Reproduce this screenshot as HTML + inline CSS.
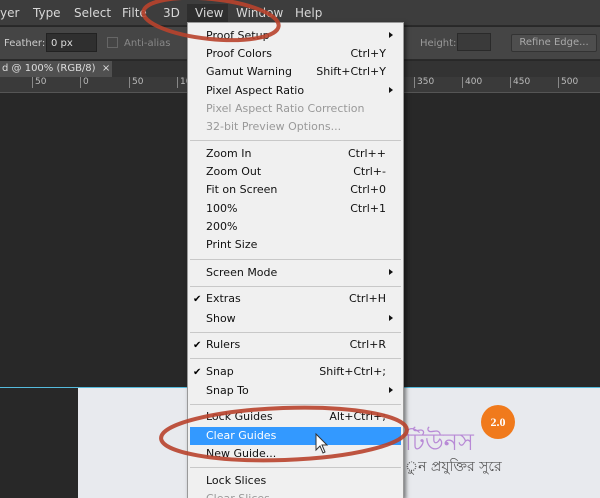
<!DOCTYPE html>
<html style="overflow:hidden;height:498px"><head><meta charset="utf-8"><style>
*{margin:0;padding:0;box-sizing:border-box}
body{width:600px;height:498px;overflow:hidden;background:#282828;font-family:"DejaVu Sans","Liberation Sans",sans-serif;position:relative}
.mb{position:absolute;left:0;top:0;width:600px;height:26px;background:#3d3d3d;border-bottom:1px solid #2a2a2a}
.mb span{position:absolute;top:6px;font-size:12px;color:#d8d8d8}
.ob{position:absolute;left:0;top:27px;width:600px;height:33px;background:#454545;border-bottom:1px solid #2a2a2a}
.ob span{position:absolute;font-size:10px;color:#ccc}
.tb{position:absolute;left:0;top:61px;width:600px;height:16px;background:#333}
.tab{position:absolute;left:0;top:61px;width:112px;height:16px;background:#505050;font-size:10px;color:#ddd;padding:2px 0 0 2px}
.ru{position:absolute;left:0;top:77px;width:600px;height:16px;background:#3a3a3a;border-bottom:1px solid #555}
.ru span{position:absolute;top:0;font-size:9px;color:#bbb;border-left:1px solid #888;padding-left:2px;height:11px}
.menu{position:absolute;left:187px;top:22px;width:217px;height:476px;overflow:hidden;background:#f0f0f0;border:1px solid #999;border-bottom:none;box-shadow:2px 2px 4px rgba(0,0,0,.5)}
.it{position:absolute;left:18px;font-size:11px;color:#111;height:18px;line-height:18px;width:180px}
.it b{font-weight:normal;position:absolute;right:0;top:0}
.dis{color:#999}
.sep{position:absolute;left:2px;width:211px;border-top:1px solid #c8c8c8}
.ar{position:absolute;left:201px;width:0;height:0;border-left:4px solid #111;border-top:3.5px solid transparent;border-bottom:3.5px solid transparent}
.ck{position:absolute;left:5px;font-size:10px}
</style></head><body>
<div class="mb">
<span style="left:0">yer</span><span style="left:33px">Type</span><span style="left:74px">Select</span><span style="left:122px">Filte</span><span style="left:163px">3D</span>
<div style="position:absolute;left:187px;top:4px;width:41px;height:22px;background:#2e2e2e"></div>
<span style="left:195px">View</span><span style="left:236px">Window</span><span style="left:295px">Help</span>
</div>
<div class="ob">
<span style="left:4px;top:11px">Feather:</span>
<div style="position:absolute;left:46px;top:6px;width:51px;height:19px;background:#2f2f2f;border:1px solid #222"></div>
<span style="left:51px;top:11px;color:#ddd">0 px</span>
<div style="position:absolute;left:107px;top:10px;width:11px;height:11px;border:1px solid #666"></div>
<span style="left:124px;top:11px;color:#888">Anti-alias</span>
<span style="left:420px;top:11px;color:#999">Height:</span>
<div style="position:absolute;left:457px;top:6px;width:34px;height:18px;background:#3a3a3a;border:1px solid #2a2a2a"></div>
<div style="position:absolute;left:511px;top:7px;width:86px;height:18px;background:#4e4e4e;border:1px solid #333;border-radius:2px;font-size:10px;color:#aaa;text-align:center;line-height:16px">Refine Edge...</div>
</div>
<div class="tb"></div><div class="tab">d @ 100% (RGB/8) &nbsp;×</div>
<div class="ru"><span style="left:32px">50</span><span style="left:80px">0</span><span style="left:129px">50</span><span style="left:177px">100</span><span style="left:414px">350</span><span style="left:462px">400</span><span style="left:510px">450</span><span style="left:558px">500</span></div>
<div style="position:absolute;left:0;top:387px;width:600px;height:1px;background:#5bd"></div>
<div style="position:absolute;left:78px;top:388px;width:522px;height:110px;background:#e8eaee"></div>
<div style="position:absolute;left:405px;top:422px;font-size:24px;color:#b88ad6;font-family:'Noto Sans CJK SC',sans-serif">টিউনস</div>
<div style="position:absolute;left:405px;top:455px;font-size:14px;color:#555">ুন প্রযুক্তির সুরে</div>
<div style="position:absolute;left:481px;top:405px;width:34px;height:34px;border-radius:50%;background:#f07a1c;color:#fff;font:bold 12px 'Liberation Serif',serif;text-align:center;line-height:34px">2.0</div>
<div class="menu">
<div class="it" style="top:4px">Proof Setup</div><div class="ar" style="top:9px"></div>
<div class="it" style="top:22px">Proof Colors<b>Ctrl+Y</b></div>
<div class="it" style="top:40px">Gamut Warning<b>Shift+Ctrl+Y</b></div>
<div class="it" style="top:59px">Pixel Aspect Ratio</div><div class="ar" style="top:64px"></div>
<div class="it dis" style="top:77px">Pixel Aspect Ratio Correction</div>
<div class="it dis" style="top:95px">32-bit Preview Options...</div>
<div class="sep" style="top:117px"></div>
<div class="it" style="top:122px">Zoom In<b>Ctrl++</b></div>
<div class="it" style="top:140px">Zoom Out<b>Ctrl+-</b></div>
<div class="it" style="top:158px">Fit on Screen<b>Ctrl+0</b></div>
<div class="it" style="top:177px">100%<b>Ctrl+1</b></div>
<div class="it" style="top:195px">200%</div>
<div class="it" style="top:213px">Print Size</div>
<div class="sep" style="top:236px"></div>
<div class="it" style="top:241px">Screen Mode</div><div class="ar" style="top:246px"></div>
<div class="sep" style="top:263px"></div>
<div class="ck" style="top:271px">✔</div>
<div class="it" style="top:267px">Extras<b>Ctrl+H</b></div>
<div class="it" style="top:287px">Show</div><div class="ar" style="top:292px"></div>
<div class="sep" style="top:309px"></div>
<div class="ck" style="top:317px">✔</div>
<div class="it" style="top:313px">Rulers<b>Ctrl+R</b></div>
<div class="sep" style="top:335px"></div>
<div class="ck" style="top:344px">✔</div>
<div class="it" style="top:340px">Snap<b>Shift+Ctrl+;</b></div>
<div class="it" style="top:359px">Snap To</div><div class="ar" style="top:364px"></div>
<div class="sep" style="top:381px"></div>
<div class="it" style="top:385px">Lock Guides<b>Alt+Ctrl+;</b></div>
<div style="position:absolute;left:2px;top:404px;width:211px;height:18px;background:#3399ff"></div>
<div class="it" style="top:404px;color:#fff">Clear Guides</div>
<div class="it" style="top:422px">New Guide...</div>
<div class="sep" style="top:444px"></div>
<div class="it" style="top:449px">Lock Slices</div>
<div class="it dis" style="top:467px">Clear Slices</div>
</div>
<svg style="position:absolute;left:0;top:0" width="600" height="498">
<ellipse cx="211" cy="19" rx="68" ry="20" transform="rotate(6 211 19)" fill="none" stroke="#b8432c" stroke-width="4" opacity=".9"/>
<ellipse cx="284" cy="434" rx="123" ry="26" transform="rotate(-2 284 434)" fill="none" stroke="#b8432c" stroke-width="4" opacity=".9"/>
<path d="M316 434 L316 450 L320 446 L323 453 L325 452 L322 445 L327 445 Z" fill="#fff" stroke="#333" stroke-width="1"/>
</svg>
</body></html>
